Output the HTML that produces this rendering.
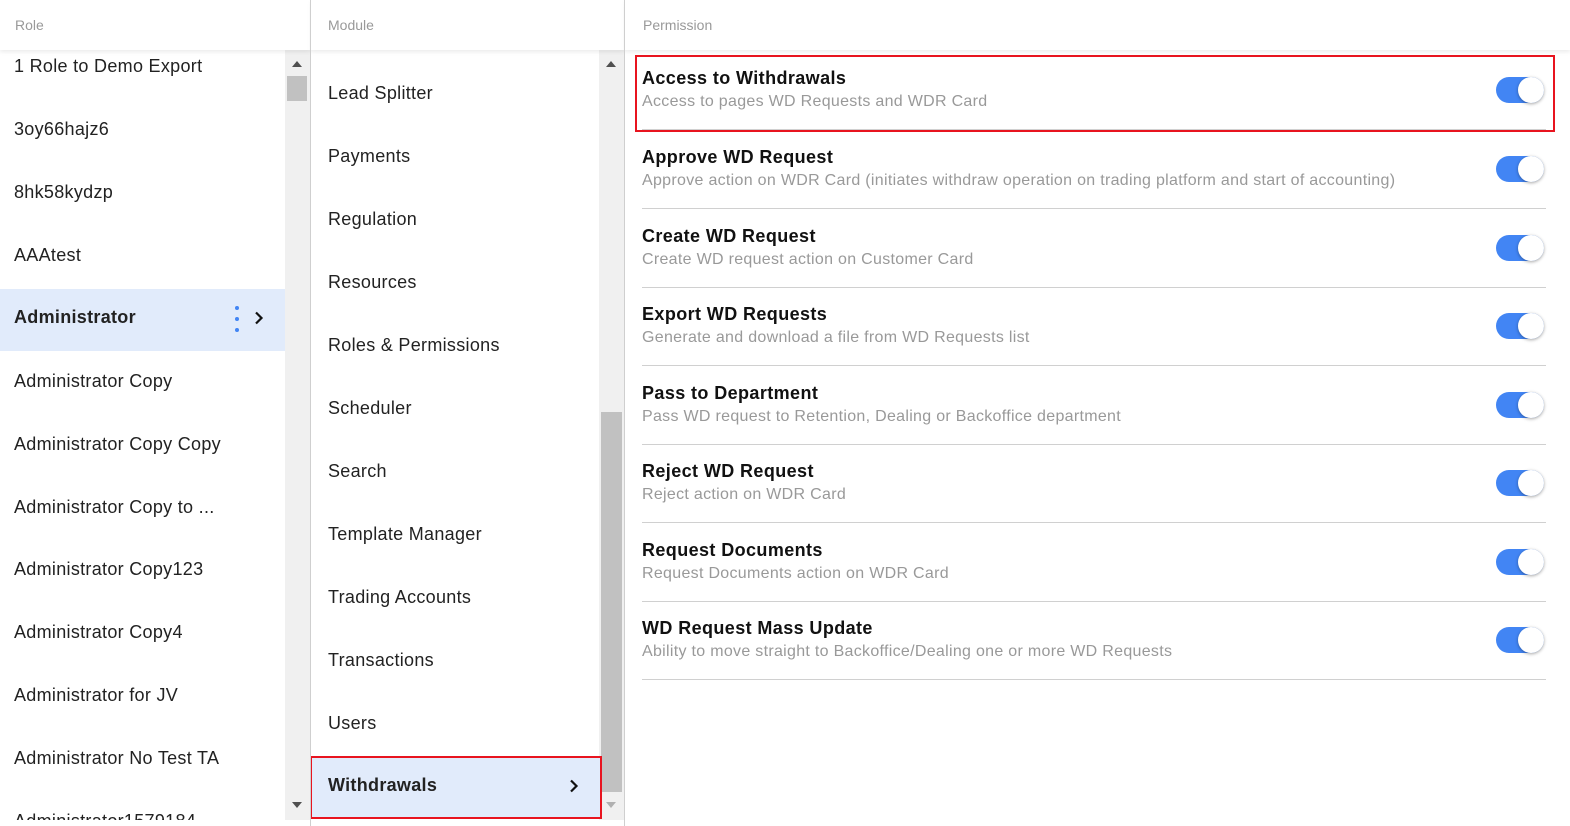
<!DOCTYPE html>
<html><head><meta charset="utf-8"><style>
*{margin:0;padding:0;box-sizing:border-box}
body{width:1570px;height:826px;overflow:hidden;background:#fff;font-family:"Liberation Sans",sans-serif;position:relative;color:#222}
.a{position:absolute}
.hdr{top:0;height:50px;background:#fff;box-shadow:0 2px 4px rgba(0,0,0,.08);z-index:5;font-size:14px;color:#999;padding:17px 0 0 0}
.vline{top:0;width:1px;height:826px;background:#cfcfcf;z-index:6}
.item{font-size:18px;color:#222;height:63px;line-height:63px;letter-spacing:.3px;white-space:nowrap}
.sb{background:#f0f0f0}
.thumb{background:#c1c1c1}
.tri-up{width:0;height:0;border-left:5px solid transparent;border-right:5px solid transparent;border-bottom:6px solid #505050}
.tri-dn{width:0;height:0;border-left:5px solid transparent;border-right:5px solid transparent;border-top:6px solid #505050}
.perm{left:642px;width:904px;height:79px;border-bottom:1px solid #d0d0d0}
.perm .t{position:absolute;left:0;top:17px;font-size:18px;font-weight:bold;letter-spacing:.4px;color:#111}
.perm .d{position:absolute;left:0;top:42px;font-size:16px;color:#999;letter-spacing:.3px;white-space:nowrap}
.tg{position:absolute;left:854px;top:26px;width:48px;height:26px;border-radius:13px;background:#4285f4}
.tg:after{content:"";position:absolute;right:0;top:0;width:26px;height:26px;border-radius:50%;background:#fff;box-shadow:0 1px 3px rgba(0,0,0,.35)}
</style></head><body>
<div class="a hdr" style="left:0;width:310px;padding-left:15px">Role</div>
<div class="a hdr" style="left:311px;width:313px;padding-left:17px">Module</div>
<div class="a hdr" style="left:625px;width:945px;padding-left:18px">Permission</div>
<div class="a vline" style="left:310px"></div>
<div class="a vline" style="left:624px"></div>

<div class="a" style="left:0;top:0;width:285px;height:820px;overflow:hidden">
<div class="a item" style="left:14px;top:35px">1 Role to Demo Export</div>
<div class="a item" style="left:14px;top:98px">3oy66hajz6</div>
<div class="a item" style="left:14px;top:161px">8hk58kydzp</div>
<div class="a item" style="left:14px;top:224px">AAAtest</div>
<div class="a" style="left:0;top:289px;width:285px;height:62px;background:#e1ebfb"></div>
<div class="a item" style="left:14px;top:286px;font-weight:bold">Administrator</div>
<div class="a" style="left:235px;top:306px;width:4px;height:4px;border-radius:2px;background:#4285f4"></div>
<div class="a" style="left:235px;top:317px;width:4px;height:4px;border-radius:2px;background:#4285f4"></div>
<div class="a" style="left:235px;top:328px;width:4px;height:4px;border-radius:2px;background:#4285f4"></div>
<svg class="a" style="left:254px;top:311px" width="10" height="14"><path d="M2 1.5 L7.5 7 L2 12.5" stroke="#111" stroke-width="2.2" fill="none"/></svg>
<div class="a item" style="left:14px;top:350px">Administrator Copy</div>
<div class="a item" style="left:14px;top:413px">Administrator Copy Copy</div>
<div class="a item" style="left:14px;top:476px">Administrator Copy to ...</div>
<div class="a item" style="left:14px;top:538px">Administrator Copy123</div>
<div class="a item" style="left:14px;top:601px">Administrator Copy4</div>
<div class="a item" style="left:14px;top:664px">Administrator for JV</div>
<div class="a item" style="left:14px;top:727px">Administrator No Test TA</div>
<div class="a item" style="left:14px;top:790px">Administrator1579184</div>
</div>
<div class="a sb" style="left:285px;top:50px;width:25px;height:770px"></div>
<div class="a tri-up" style="left:292px;top:61px"></div>
<div class="a thumb" style="left:287px;top:76px;width:20px;height:25px"></div>
<div class="a tri-dn" style="left:292px;top:802px"></div>
<div class="a" style="left:0;top:820px;width:310px;height:6px;background:#fff"></div>

<div class="a item" style="left:328px;top:62px">Lead Splitter</div>
<div class="a item" style="left:328px;top:125px">Payments</div>
<div class="a item" style="left:328px;top:188px">Regulation</div>
<div class="a item" style="left:328px;top:251px">Resources</div>
<div class="a item" style="left:328px;top:314px">Roles &amp; Permissions</div>
<div class="a item" style="left:328px;top:377px">Scheduler</div>
<div class="a item" style="left:328px;top:440px">Search</div>
<div class="a item" style="left:328px;top:503px">Template Manager</div>
<div class="a item" style="left:328px;top:566px">Trading Accounts</div>
<div class="a item" style="left:328px;top:629px">Transactions</div>
<div class="a item" style="left:328px;top:692px">Users</div>
<div class="a sb" style="left:599px;top:50px;width:25px;height:770px"></div>
<div class="a tri-up" style="left:606px;top:61px"></div>
<div class="a thumb" style="left:601px;top:412px;width:21px;height:380px"></div>
<div class="a tri-dn" style="left:606px;top:802px;border-top-color:#b0b0b0"></div>
<div class="a" style="left:310px;top:756px;width:292px;height:63px;background:#e1ebfb;border:2px solid #e8141f;z-index:3"></div>
<div class="a item" style="left:328px;top:754px;font-weight:bold;z-index:4">Withdrawals</div>
<svg class="a" style="left:569px;top:779px;z-index:4" width="10" height="14"><path d="M2 1.5 L7.5 7 L2 12.5" stroke="#111" stroke-width="2.2" fill="none"/></svg>

<div class="a perm" style="top:51px"><div class="t">Access to Withdrawals</div><div class="d">Access to pages WD Requests and WDR Card</div><div class="tg"></div></div>
<div class="a" style="left:635px;top:55px;width:920px;height:77px;border:2px solid #e8141f"></div>
<div class="a perm" style="top:130px"><div class="t">Approve WD Request</div><div class="d">Approve action on WDR Card (initiates withdraw operation on trading platform and start of accounting)</div><div class="tg"></div></div>
<div class="a perm" style="top:209px"><div class="t">Create WD Request</div><div class="d">Create WD request action on Customer Card</div><div class="tg"></div></div>
<div class="a perm" style="top:287px"><div class="t">Export WD Requests</div><div class="d">Generate and download a file from WD Requests list</div><div class="tg"></div></div>
<div class="a perm" style="top:366px"><div class="t">Pass to Department</div><div class="d">Pass WD request to Retention, Dealing or Backoffice department</div><div class="tg"></div></div>
<div class="a perm" style="top:444px"><div class="t">Reject WD Request</div><div class="d">Reject action on WDR Card</div><div class="tg"></div></div>
<div class="a perm" style="top:523px"><div class="t">Request Documents</div><div class="d">Request Documents action on WDR Card</div><div class="tg"></div></div>
<div class="a perm" style="top:601px"><div class="t">WD Request Mass Update</div><div class="d">Ability to move straight to Backoffice/Dealing one or more WD Requests</div><div class="tg"></div></div>
</body></html>
